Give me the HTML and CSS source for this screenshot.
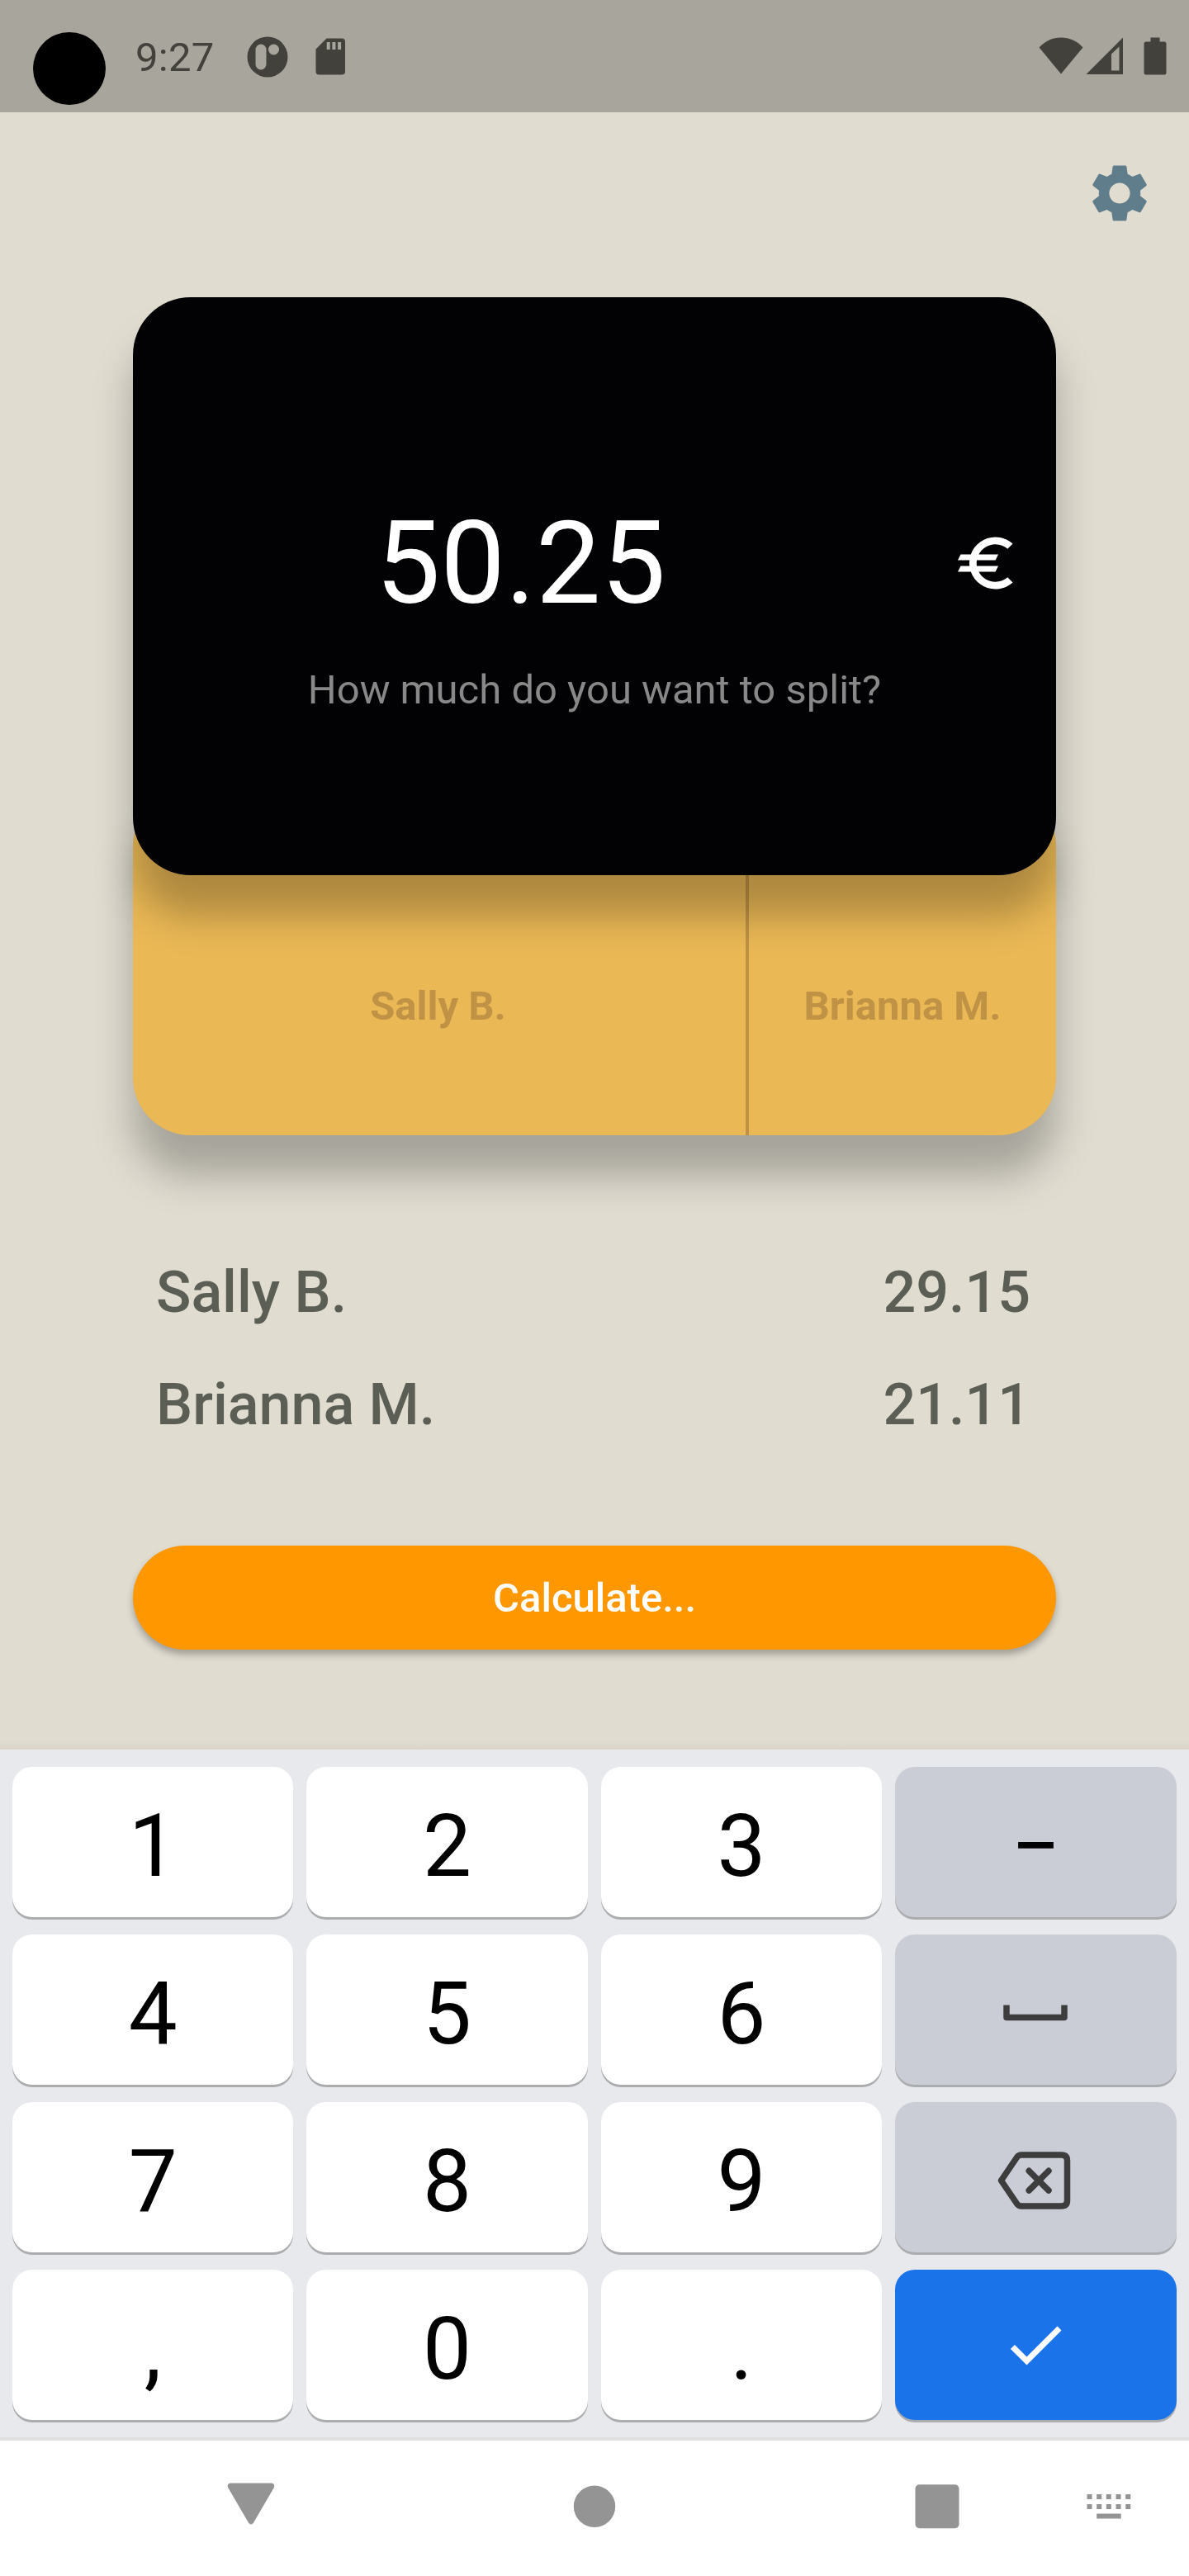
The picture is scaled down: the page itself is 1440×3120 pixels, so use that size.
FILE: index.html
```html
<!DOCTYPE html>
<html lang="en">
<head>
<meta charset="utf-8">
<title>Split the bill</title>
<link rel="stylesheet" href="styles.css">
</head>
<body>
<div class="phone">
  <header class="status">
    <span class="camera"></span>
    <span class="clock">9:27</span>
    <svg class="status-app" viewBox="0 0 50 50"><path fill-rule="evenodd" d="M25 .5a24.5 24.5 0 1 1 0 49a24.5 24.5 0 1 1 0-49zM17 9.500a6.500 6.500 0 0 0-6.500 6.500v18a6.500 6.500 0 0 0 13 0v-18a6.500 6.500 0 0 0-6.500-6.500zM32.500 9.500a6.500 6.500 0 1 0 0 13a6.500 6.500 0 1 0 0-13z"/></svg>
    <svg class="status-sd" viewBox="0 0 36 45"><path fill-rule="evenodd" d="M13.500.5H32a4 4 0 0 1 4 4v36a4 4 0 0 1-4 4H4.500a4 4 0 0 1-4-4V13.500zM13.700 5v9h4V5zM20.400 5v9h4V5zM27.100 5v9h4V5z"/></svg>
    <svg class="status-wifi" viewBox="0 0 54 46"><path d="M27 44.500L.5 12.500C7.500 4.500 17 .5 27 .5s19.500 4 26.500 12z"/></svg>
    <svg class="status-signal" viewBox="0 0 46 46"><path fill-rule="evenodd" d="M45 .5V45H.5zM31 20.500V40.500H40.500V11.500z"/></svg>
    <svg class="status-battery" viewBox="0 0 28 46"><path d="M8.500.5h11v5H25a2.500 2.500 0 0 1 2.500 2.500v35a2.500 2.500 0 0 1-2.500 2.500H3A2.500 2.500 0 0 1 .5 43V8A2.500 2.500 0 0 1 3 5.500h5.500z"/></svg>
  </header>

  <main class="screen">
    <div class="toolbar">
      <svg class="icon gear" viewBox="0 0 24 24"><path d="M19.140 12.940c.04-.3.06-.61.06-.94c0-.32-.02-.64-.07-.94l2.030-1.580c.18-.14.23-.41.12-.61l-1.920-3.320c-.12-.22-.37-.29-.59-.22l-2.390.96c-.5-.38-1.030-.7-1.620-.94L14.400 2.810c-.04-.24-.24-.41-.48-.41h-3.840c-.24 0-.43.17-.47.41L9.250 5.350C8.660 5.590 8.120 5.920 7.630 6.290L5.240 5.330c-.22-.08-.47 0-.59.22L2.740 8.870C2.620 9.080 2.660 9.340 2.860 9.480l2.030 1.580C4.840 11.360 4.800 11.690 4.800 12s.02.64.07.94l-2.030 1.580c-.18.14-.23.41-.12.61l1.920 3.320c.12.22.37.29.59.22l2.390-.96c.5.38 1.030.7 1.620.94l.36 2.540c.05.24.24.41.48.41h3.840c.24 0 .44-.17.47-.41l.36-2.540c.59-.24 1.130-.56 1.620-.94l2.390.96c.22.08.47 0 .59-.22l1.920-3.320c.12-.22.07-.47-.12-.61zM12 15.600c-1.980 0-3.600-1.620-3.600-3.600s1.620-3.600 3.600-3.600s3.600 1.620 3.600 3.600s-1.620 3.600-3.600 3.600z"/></svg>
    </div>

    <section class="amount-card">
      <div class="amount-row">
        <span class="amount">50.25</span>
        <svg class="icon euro" viewBox="0 0 24 24"><path d="M15 18.500c-2.510 0-4.680-1.420-5.760-3.500H15l1-2H8.580c-.05-.33-.08-.66-.08-1s.03-.67.08-1H15l1-2H9.240C10.320 6.920 12.500 5.500 15 5.500c1.610 0 3.090.59 4.230 1.570L21 5.300C19.410 3.870 17.300 3 15 3c-3.920 0-7.240 2.510-8.480 6H3l-1 2h4.060c-.04.33-.06.66-.06 1s.02.67.06 1H3l-1 2h4.520c1.240 3.490 4.560 6 8.480 6c2.310 0 4.410-.87 6-2.300l-1.780-1.770c-1.130.98-2.600 1.570-4.220 1.570z"/></svg>
      </div>
      <p class="hint">How much do you want to split?</p>
    </section>

    <section class="share-card">
      <span class="share share-major">Sally B.</span>
      <span class="share share-minor">Brianna M.</span>
    </section>

    <ul class="results">
      <li class="result"><span>Sally B.</span><span>29.15</span></li>
      <li class="result"><span>Brianna M.</span><span>21.11</span></li>
    </ul>

    <button class="calculate">Calculate...</button>
  </main>

  <section class="keyboard">
    <span class="key">1</span><span class="key">2</span><span class="key">3</span><span class="key key-alt">−</span>
    <span class="key">4</span><span class="key">5</span><span class="key">6</span>
    <span class="key key-alt key-icon"><svg class="space" viewBox="0 0 80 24"><path d="M5 3.500V18.500H75V3.500"/></svg></span>
    <span class="key">7</span><span class="key">8</span><span class="key">9</span>
    <span class="key key-alt key-icon"><svg class="backspace" viewBox="0 0 92 72"><path d="M31 5H79.500Q86.500 5 86.500 12V60Q86.500 67 79.500 67H31Q27.500 67 25.500 64L6.500 36L25.500 8Q27.500 5 31 5zM40.200 24.300L64 48M64 24.300L40.200 48"/></svg></span>
    <span class="key">,</span><span class="key">0</span><span class="key">.</span>
    <span class="key key-enter key-icon"><svg class="icon" viewBox="0 0 24 24"><path d="M9 16.170L4.830 12l-1.420 1.410L9 19L21 7l-1.410-1.410z"/></svg></span>
  </section>

  <nav class="navbar">
    <svg class="icon" viewBox="0 0 84 84"><path d="M17.500 13.500H66.500Q71.500 14 69.800 19L45 61.500Q42 65.500 39 61.500L14.200 19Q12.500 14 17.500 13.500z"/></svg>
    <svg class="icon nav-home" viewBox="0 0 84 84"><circle cx="42" cy="41.700" r="25.200"/></svg>
    <svg class="icon nav-recent" viewBox="0 0 84 84"><rect x="15.500" y="15.200" width="53" height="53" rx="5"/></svg>
    <svg class="icon nav-keys" viewBox="0 0 84 84"><path d="M15.500 27h6v6h-6zM27.200 27h6v6h-6zM38.800 27h6v6h-6zM50.500 27h6v6h-6zM62.200 27h6v6h-6zM15.500 39h6v6h-6zM27.200 39h6v6h-6zM38.800 39h6v6h-6zM50.500 39h6v6h-6zM62.200 39h6v6h-6zM27.200 50.500h29.500v6h-29.500z"/></svg>
  </nav>
</div>
</body>
</html>
```

FILE: styles.css
```css
* { box-sizing: border-box; }

body {
  margin: 0;
  font-family: Roboto, "Liberation Sans", sans-serif;
}

.phone {
  display: flex;
  flex-direction: column;
  width: 1440px;
  height: 3120px;
  overflow: hidden;
  background: #e0dcd0;
}

.icon { display: block; flex: none; width: 84px; height: 84px; }

/* Status bar */
.status {
  display: flex;
  align-items: flex-start;
  height: 136px;
  padding: 39px 27px 0 40px;
  background: #a8a59c;
  fill: #43413c;
}
.status svg { flex: none; }
.camera { width: 88px; height: 88px; border-radius: 50%; background: #000; }
.clock {
  width: 134px;
  margin: 2px 0 0 36px;
  color: #43413c;
  font-size: 49px;
  line-height: 58px;
  letter-spacing: .3px;
}
.status-app { width: 50px; height: 50px; margin: 4.500px 0 0 .5px; }
.status-sd { width: 36px; height: 45px; margin: 6.500px 0 0 33.500px; }
.status-wifi { width: 54px; height: 46px; margin: 6px 0 0 auto; }
.status-signal { width: 46px; height: 46px; margin: 6px 0 0 3px; }
.status-battery { width: 28px; height: 46px; margin: 6px 0 0 24px; }

/* App screen */
.screen {
  display: flex;
  flex-direction: column;
  height: 1983px;
  padding: 0 161px;
  background: linear-gradient(to top, #d8d3c6, #e0dcd0 10px);
}
.toolbar {
  display: flex;
  justify-content: flex-end;
  height: 224px;
  margin-right: -119px;
  padding-top: 56px;
}
.gear { fill: #607d8b; }

.amount-card {
  position: relative;
  z-index: 1;
  height: 700px;
  padding: 280px 42px 0 0;
  border-radius: 70px;
  background: #020204;
  box-shadow: 0 49px 48px rgba(0, 0, 0, .26);
}
.amount-row { display: flex; align-items: center; height: 84px; }
.amount {
  flex: 1;
  margin-right: 53px;
  color: #fff;
  font-size: 140px;
  line-height: 84px;
  text-align: center;
}
.euro { fill: #fff; }
.hint {
  margin: 83px -42px 0 0;
  color: #888;
  font-size: 49px;
  line-height: 58px;
  text-align: center;
}

.share-card {
  display: flex;
  height: 420px;
  margin-top: -105px;
  border-radius: 70px;
  background: #eab855;
  box-shadow: 0 49px 48px rgba(0, 0, 0, .26);
}
.share {
  padding-top: 235px;
  color: #bf9245;
  font-size: 49px;
  font-weight: 700;
  line-height: 58px;
  text-align: center;
}
.share-major { width: 746px; padding-right: 3px; border-right: 4px solid #bf9245; }
.share-minor { flex: 1; }

.results {
  margin: 122px 31px 0 28px;
  padding: 0;
  list-style: none;
}
.result {
  display: flex;
  justify-content: space-between;
  color: #5a5e54;
  font-size: 70px;
  font-weight: 500;
  line-height: 136px;
}

.calculate {
  height: 126px;
  margin: 103px 0 0;
  padding: 2px 0 0;
  border: 0;
  border-radius: 63px;
  background: #ff9800;
  box-shadow: 0 6px 9px rgba(0, 0, 0, .28);
  color: #fff;
  font: 500 49px/124px Roboto, "Liberation Sans", sans-serif;
}

/* Numeric keyboard */
.keyboard {
  display: grid;
  grid-template-columns: repeat(4, 340.400px);
  grid-auto-rows: 182px;
  gap: 21px 16px;
  height: 833px;
  padding: 21px 0 0 15px;
  background: #e8e9ed;
}
.key {
  padding-top: 6px;
  border-radius: 24px;
  background: #fff;
  box-shadow: 0 3px #abacae;
  color: #000;
  font-size: 105px;
  line-height: 182px;
  text-align: center;
}
.key-alt { background: #cbcdd6; }
.key-enter { background: #1a73e9; fill: #fff; }
.key-icon { display: flex; align-items: center; justify-content: center; padding: 0; }
.space { width: 80px; height: 24px; margin-top: 5px; fill: none; stroke: #3d3d3d; stroke-width: 7.500px; stroke-linejoin: round; stroke-linecap: butt; }
.backspace { width: 92px; height: 72px; margin-right: 4px; margin-top: 7px; fill: none; stroke: #3d3d3d; stroke-width: 7.500px; stroke-linejoin: round; stroke-linecap: round; }

/* System navigation */
.navbar {
  display: flex;
  height: 168px;
  padding: 38px 0 0 262px;
  border-top: 4px solid #e0e0e0;
  background: #fff;
  fill: #949494;
}
.nav-home { margin-left: 332px; }
.nav-recent { margin-left: 331px; }
.nav-keys { margin-left: 124px; }
```
